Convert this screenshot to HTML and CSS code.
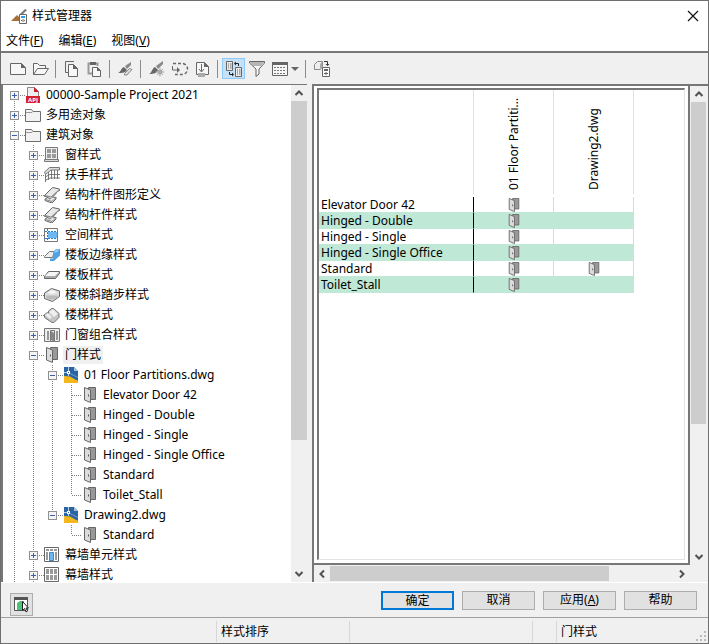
FILE: index.html
```
<!DOCTYPE html>
<html lang="zh-CN">
<head>
  <meta charset="UTF-8">
  <title>样式管理器</title>
  <link rel="stylesheet" href="styles.css">
</head>
<body>
  <!-- shared icons -->
  <svg class="defs" width="0" height="0">
    <symbol id="door" viewBox="0 0 16 16">
      <path d="M6.500.5h7v12h-7z" fill="#999" stroke="#666"/>
      <path d="M2.500.5L8.500 3v12.500l-6-2.500z" fill="#dcdcdc" stroke="#666"/>
      <path d="M6 7.500h1v2H6z" fill="#555"/>
    </symbol>
    <symbol id="folder" viewBox="0 0 16 16">
      <path d="M.5 2.500h6l1.500 2h7.500v10H.5z" fill="#f2f2f2" stroke="#6e6e6e"/>
      <path d="M1 5.500h6l1-1" fill="none" stroke="#999"/>
    </symbol>
    <symbol id="dwg" viewBox="0 0 16 16">
      <path d="M1 0h10l4 4v10L1 9z" fill="#2b64a2"/>
      <path d="M11 0l4 4h-4z" fill="#a9c0d8"/>
      <path d="M1 9l6 .5 8 4.500v2H1z" fill="#f4b71e"/>
      <path d="M5.500 0v4M5.500 7v2M1 5.500h3" stroke="#b9cde2" fill="none"/>
      <path d="M7 6.500l8 4" stroke="#8fb0d2" stroke-width=".7" fill="none"/>
      <path d="M4 4h3v3H4z" fill="#fff"/>
      <path d="M5 5h1v1H5z" fill="#2b64a2"/>
    </symbol>
    <symbol id="beam" viewBox="0 0 16 16">
      <path d="M.5 8.500l8-8 7 1.500v1.500l-2 1-5 5.500 3.500.5v1.500l-4 4-7-2.500v-1.500l3.500-2-4-.5z" fill="#e9e9e9" stroke="#666"/>
      <path d="M1 8.500l6 1.500 8.500-7.500M1.500 12.500l6.500 2 4-4" fill="none" stroke="#888"/>
      <path d="M5 10.500l2 .5 6-6v1l-5 5-2 1.500-2-.5z" fill="#8a8a8a"/>
    </symbol>
    <symbol id="up" viewBox="0 0 16 16"><path d="M4.500 10L8 6.500l3.500 3.500" fill="none" stroke="#505050" stroke-width="2"/></symbol>
    <symbol id="down" viewBox="0 0 16 16"><path d="M4.500 6L8 9.500 11.500 6" fill="none" stroke="#505050" stroke-width="2"/></symbol>
    <symbol id="left" viewBox="0 0 16 16"><path d="M10 4.500L6.500 8l3.500 3.500" fill="none" stroke="#505050" stroke-width="2"/></symbol>
    <symbol id="right" viewBox="0 0 16 16"><path d="M6 4.500L9.500 8 6 11.500" fill="none" stroke="#505050" stroke-width="2"/></symbol>
  </svg>

  <div class="window">
    <header class="titlebar">
      <svg width="17" height="17" viewBox="0 0 17 17">
        <path d="M0 13l6-6 2 2v4z" fill="#a9713a"/>
        <path d="M8 7l6-6 2 1-4 4z" fill="#777"/>
        <path d="M8.500 6.500h7v9h-7z" fill="#fff" stroke="#666"/>
        <path d="M10 8h4v2h-4z" fill="#2d9ae8"/>
        <path d="M10 12h4v1h-4zM11.500 11v3h1v-3z" fill="#666"/>
      </svg>
      <h1>样式管理器</h1>
      <button class="close" aria-label="关闭">
        <svg width="12" height="12" viewBox="0 0 12 12"><path d="M1 1l10 10M11 1L1 11" stroke="#111" stroke-width="1.200"/></svg>
      </button>
    </header>

    <nav class="menubar">
      <button>文件(<u>F</u>)</button>
      <button>编辑(<u>E</u>)</button>
      <button>视图(<u>V</u>)</button>
    </nav>

    <div class="toolbar">
      <button aria-label="新建图形">
        <svg width="18" height="16" viewBox="0 0 18 16"><path d="M1.500 2.500h11l4 4v7h-15z" fill="#f7f7f7" stroke="#666"/><path d="M12 2v5h5z" fill="#666"/></svg>
      </button>
      <button aria-label="打开图形">
        <svg width="18" height="16" viewBox="0 0 18 16"><path d="M1.500 13.500v-11h4l2 2h6v3M1.500 13.500l4-6h11l-4 6z" fill="#f7f7f7" stroke="#666"/></svg>
      </button>
      <span class="sep"></span>
      <button aria-label="复制">
        <svg width="16" height="16" viewBox="0 0 16 16"><path d="M10 .5H1.500v11H4" fill="none" stroke="#666"/><path d="M4.500 3.500h5l4 4v8h-9z" fill="#f7f7f7" stroke="#666"/><path d="M9 3v5h5z" fill="#666"/></svg>
      </button>
      <button aria-label="粘贴">
        <svg width="16" height="16" viewBox="0 0 16 16"><path d="M5 12.500H1.500v-10h9V5" fill="none" stroke="#999" stroke-width="2"/><path d="M3 1h6v3H3z" fill="#666"/><path d="M5.500 6.500h5l3 3v6h-8z" fill="#f7f7f7" stroke="#666"/><path d="M10 6v4h4z" fill="#666"/></svg>
      </button>
      <span class="sep"></span>
      <button aria-label="编辑样式">
        <svg width="18" height="16" viewBox="0 0 18 16"><path d="M1 12c3-1 3-5 6-6l3 3c-2 3-5 3-9 3z" fill="#666"/><path d="M8 5l6-4v3l-4 4z" fill="#888"/><path d="M7.500 12.500l5-5 2.500 1-5 5.500H7.500z" fill="#ddd" stroke="#888"/></svg>
      </button>
      <span class="sep"></span>
      <button aria-label="新建样式">
        <svg width="18" height="16" viewBox="0 0 18 16"><path d="M1 13c3-1 3-6 6-7l3 3c-1 3-4 4-9 4z" fill="#666"/><path d="M8 5l7-5v3l-5 5z" fill="#888"/><path d="M12 6.500v9M7.500 11h9M9 8l6 6M15 8l-6 6" stroke="#aaa"/><circle cx="12" cy="11" r="2.500" fill="#aaa"/></svg>
      </button>
      <button aria-label="清理">
        <svg width="18" height="16" viewBox="0 0 18 16"><path d="M2 2.500h9a5.500 5.500 0 0 1 0 11H4" fill="none" stroke="#666" stroke-width="1.500" stroke-dasharray="3 2"/><path d="M1.500 5v4H6" fill="none" stroke="#666"/><path d="M6 6v6l3-3z" fill="#666"/></svg>
      </button>
      <button aria-label="导入">
        <svg width="16" height="16" viewBox="0 0 16 16"><path d="M3 13.500H1.500v-12h8l4 4v8H10" fill="#f7f7f7" stroke="#666"/><path d="M9 1v5h5z" fill="#666"/><path d="M6.500 3v7M4 8l2.500 3L9 8" fill="none" stroke="#666"/><path d="M3 12h7v4H3z" fill="#aaa"/></svg>
      </button>
      <span class="sep"></span>
      <button class="on" aria-label="切换视图">
        <svg width="18" height="18" viewBox="0 0 18 18"><path d="M1.500 1.500h6v9h-6zM10.500 7.500h6v9h-6z" fill="#eee" stroke="#666"/><path d="M3 4h1M5 4h1.500M3 6h1M5 6h1.500M3 8h1M5 8h1.500M12 10h1M14 10h1.500M12 12h1M14 12h1.500M12 14h1M14 14h1.500" stroke="#666"/><path d="M10 3.500h3.500V6M8 14.500H4.500V12" fill="none" stroke="#222"/><path d="M11 1.500v4L9 3.500zM7 12.500v4l2-2z" fill="#222"/></svg>
      </button>
      <button aria-label="过滤">
        <svg width="18" height="18" viewBox="0 0 18 18"><path d="M1.500 1.500h15v1.500L11 9v5l-3 2.500V9L1.500 3z" fill="#f7f7f7" stroke="#666"/><path d="M2 2h14l-3 4H5z" fill="#b5b5b5"/></svg>
      </button>
      <button class="wide" aria-label="视图">
        <svg width="28" height="16" viewBox="0 0 28 16"><path d="M1.500 1.500h15v13h-15z" fill="#f7f7f7" stroke="#666"/><path d="M1 1h16v3H1z" fill="#666"/><path d="M3 6.500h12M3 9.500h12M3 12.500h12" stroke="#777" stroke-dasharray="2 1"/><path d="M20 6h8l-4 4z" fill="#666"/></svg>
      </button>
      <span class="sep"></span>
      <button aria-label="指定样式">
        <svg width="18" height="18" viewBox="0 0 18 18"><path d="M1.500 4.500l3-3h5v5l-2 3h-6z" fill="#eee" stroke="#888"/><path d="M7 4l2-2v5L7 9z" fill="#aaa"/><path d="M9.500 7.500h7v9h-7z" fill="#fff" stroke="#666"/><path d="M11 9h4v2h-4zM11 13h4v1h-4zM12.500 12h1v3h-1z" fill="#666"/><path d="M11 1.500h3.500V5" stroke="#333" fill="none"/><path d="M12.500 4h4l-2 2z" fill="#333"/></svg>
      </button>
    </div>

    <main class="panes">
      <section class="tree-pane">
        <ul class="tree root">
          <li><div class="row"><button class="toggle" aria-label="展开"></button><i></i>
            <svg width="16" height="16" viewBox="0 0 16 16"><path d="M2.500.5h7l4 4v10h-11z" fill="#eee" stroke="#888"/><path d="M9 0l5 5H9z" fill="#c9202c"/><path d="M1 9h14v7H1z" fill="#d7202c"/><text x="8" y="14.500" class="badge">APJ</text></svg>
            <span>00000-Sample Project 2021</span></div></li>
          <li><div class="row"><button class="toggle" aria-label="展开"></button><i></i><svg width="16" height="16"><use href="#folder"/></svg><span>多用途对象</span></div></li>
          <li class="more"><div class="row"><button class="toggle open" aria-label="折叠"></button><i></i><svg width="16" height="16"><use href="#folder"/></svg><span>建筑对象</span></div>
            <ul class="tree">
              <li><div class="row"><button class="toggle" aria-label="展开"></button><i></i>
                <svg width="16" height="16" viewBox="0 0 16 16"><path d="M1.500.5h12v12h-12z" fill="#eee" stroke="#777"/><path d="M3 2h4v4H3zM8 2h4v4H8zM3 7h4v4H3zM8 7h4v4H8z" fill="#999"/><path d="M.5 12.500h14v2H.5z" fill="#ddd" stroke="#777"/></svg>
                <span>窗样式</span></div></li>
              <li><div class="row"><button class="toggle" aria-label="展开"></button><i></i>
                <svg width="16" height="16" viewBox="0 0 16 16"><path d="M1.500 15V7M4.500 13V5M7.500 12V3M10.500 12V3M13.500 12V3M1 13.500l5-2.500h10M1 10l5-2.500h10" fill="none" stroke="#777"/><path d="M.5 5l5-4.500h10v2.500H7L1.500 7.500z" fill="#ddd" stroke="#777"/></svg>
                <span>扶手样式</span></div></li>
              <li><div class="row"><button class="toggle" aria-label="展开"></button><i></i><svg width="16" height="16"><use href="#beam"/></svg><span>结构杆件图形定义</span></div></li>
              <li><div class="row"><button class="toggle" aria-label="展开"></button><i></i><svg width="16" height="16"><use href="#beam"/></svg><span>结构杆件样式</span></div></li>
              <li><div class="row"><button class="toggle" aria-label="展开"></button><i></i>
                <svg width="16" height="16" viewBox="0 0 16 16"><path d="M.5 1.500h13v13H.5z" fill="#fff" stroke="#777"/><path d="M4 5h9v6H4z" fill="#6db8f2"/><path d="M3.500 2v12M1 4.500h12M1 11.500h12" stroke="#1d83d4" stroke-dasharray="2 1"/></svg>
                <span>空间样式</span></div></li>
              <li><div class="row"><button class="toggle" aria-label="展开"></button><i></i>
                <svg width="16" height="16" viewBox="0 0 16 16"><path d="M.5 9.500l5-5h5l-2 6h-8z" fill="#eee" stroke="#777"/><path d="M9 8.500V5l3-3h4v6.500L10 14H6v-2.500h3z" fill="#4da3e6"/><path d="M9.500 5.500l3-3h3l-3 3z" fill="#9bcdf5"/></svg>
                <span>楼板边缘样式</span></div></li>
              <li><div class="row"><button class="toggle" aria-label="展开"></button><i></i>
                <svg width="16" height="16" viewBox="0 0 16 16"><path d="M.5 9.500l4-5h11v2l-4 5H.5z" fill="#aaa" stroke="#666"/><path d="M1 9l4-4h10l-4 4z" fill="#f5f5f5"/></svg>
                <span>楼板样式</span></div></li>
              <li><div class="row"><button class="toggle" aria-label="展开"></button><i></i>
                <svg width="16" height="16" viewBox="0 0 16 16"><path d="M.5 6l7-4.500 8 2.500v5.500l-7 5-8-3z" fill="#ddd" stroke="#666"/><path d="M2 8.500h12v2l-5 2H3z" fill="#bbb"/><path d="M3 6l5-3 5 2-4 2z" fill="#f4f4f4"/></svg>
                <span>楼梯斜踏步样式</span></div></li>
              <li><div class="row"><button class="toggle" aria-label="展开"></button><i></i>
                <svg width="16" height="16" viewBox="0 0 16 16"><path d="M.5 7.500l3-2 1 1V4l3-2.500h2l5.500 5v4l-5 5h-2l-7.500-5z" fill="#c4c4c4" stroke="#777"/><path d="M1 8l3-2 4 4-2 2zM5 5l4-3 5 5-4 3z" fill="#eee"/></svg>
                <span>楼梯样式</span></div></li>
              <li><div class="row"><button class="toggle" aria-label="展开"></button><i></i>
                <svg width="16" height="16" viewBox="0 0 16 16"><path d="M.5 1.500h15v13H.5z" fill="#eee" stroke="#777"/><path d="M3 4h2v9H3zM12 4h2v9h-2z" fill="#999"/><path d="M6.500 3.500h4v11h-4z" fill="#eee" stroke="#777"/><path d="M7 4l3 2v9l-3-2z" fill="#888"/></svg>
                <span>门窗组合样式</span></div></li>
              <li><div class="row"><button class="toggle open" aria-label="折叠"></button><i></i><svg width="16" height="16"><use href="#door"/></svg><span class="selected">门样式</span></div>
                <ul class="tree">
                  <li><div class="row"><button class="toggle open" aria-label="折叠"></button><i></i><svg width="16" height="16"><use href="#dwg"/></svg><span>01 Floor Partitions.dwg</span></div>
                    <ul class="tree">
                      <li><div class="row leaf"><i></i><svg width="16" height="16"><use href="#door"/></svg><span>Elevator Door 42</span></div></li>
                      <li><div class="row leaf"><i></i><svg width="16" height="16"><use href="#door"/></svg><span>Hinged - Double</span></div></li>
                      <li><div class="row leaf"><i></i><svg width="16" height="16"><use href="#door"/></svg><span>Hinged - Single</span></div></li>
                      <li><div class="row leaf"><i></i><svg width="16" height="16"><use href="#door"/></svg><span>Hinged - Single Office</span></div></li>
                      <li><div class="row leaf"><i></i><svg width="16" height="16"><use href="#door"/></svg><span>Standard</span></div></li>
                      <li><div class="row leaf"><i></i><svg width="16" height="16"><use href="#door"/></svg><span>Toilet_Stall</span></div></li>
                    </ul>
                  </li>
                  <li><div class="row"><button class="toggle open" aria-label="折叠"></button><i></i><svg width="16" height="16"><use href="#dwg"/></svg><span>Drawing2.dwg</span></div>
                    <ul class="tree">
                      <li><div class="row leaf"><i></i><svg width="16" height="16"><use href="#door"/></svg><span>Standard</span></div></li>
                    </ul>
                  </li>
                </ul>
              </li>
              <li><div class="row"><button class="toggle" aria-label="展开"></button><i></i>
                <svg width="16" height="16" viewBox="0 0 16 16"><path d="M.5.5h14v14H.5z" fill="#fff" stroke="#666"/><path d="M2 2h3v2H2zM6 2h3v2H6zM10 2h3v2h-3zM2 5h2v8H2zM11 5h2v8h-2z" fill="#999"/><path d="M5.500 5.500h4v8h-4z" fill="#6db8f2" stroke="#3a8ac8"/></svg>
                <span>幕墙单元样式</span></div></li>
              <li class="more"><div class="row"><button class="toggle" aria-label="展开"></button><i></i>
                <svg width="16" height="16" viewBox="0 0 16 16"><path d="M.5.5h14v14H.5z" fill="#fff" stroke="#666"/><path d="M2 2h3v5H2zM6 2h3v5H6zM10 2h3v5h-3zM2 8h3v5H2zM6 8h3v5H6zM10 8h3v5h-3z" fill="#999"/></svg>
                <span>幕墙样式</span></div></li>
            </ul>
          </li>
        </ul>
        <div class="vscroll">
          <svg width="16" height="16"><use href="#up"/></svg>
          <div class="track"><div class="thumb tree-thumb"></div></div>
          <svg width="16" height="16"><use href="#down"/></svg>
        </div>
      </section>

      <section class="grid-pane">
        <div class="view">
          <div class="sheet">
            <table>
              <colgroup><col class="names"><col class="file"><col class="file"></colgroup>
              <thead>
                <tr><th></th><th><span>01 Floor Partiti...</span></th><th><span>Drawing2.dwg</span></th></tr>
              </thead>
              <tbody>
                <tr><td>Elevator Door 42</td><td><svg width="16" height="16"><use href="#door"/></svg></td><td></td></tr>
                <tr><td>Hinged - Double</td><td><svg width="16" height="16"><use href="#door"/></svg></td><td></td></tr>
                <tr><td>Hinged - Single</td><td><svg width="16" height="16"><use href="#door"/></svg></td><td></td></tr>
                <tr><td>Hinged - Single Office</td><td><svg width="16" height="16"><use href="#door"/></svg></td><td></td></tr>
                <tr><td>Standard</td><td><svg width="16" height="16"><use href="#door"/></svg></td><td><svg width="16" height="16"><use href="#door"/></svg></td></tr>
                <tr><td>Toilet_Stall</td><td><svg width="16" height="16"><use href="#door"/></svg></td><td></td></tr>
              </tbody>
            </table>
          </div>
        </div>
        <div class="vscroll">
          <svg width="16" height="16"><use href="#up"/></svg>
          <div class="track"><div class="thumb grid-thumb"></div></div>
          <svg width="16" height="16"><use href="#down"/></svg>
        </div>
        <div class="hscroll">
          <svg width="16" height="16"><use href="#left"/></svg>
          <div class="track"><div class="thumb"></div></div>
          <svg width="16" height="16"><use href="#right"/></svg>
        </div>
      </section>
    </main>

    <div class="actions">
      <button class="preview" aria-label="浮动查看器">
        <svg width="17" height="17" viewBox="0 0 17 17"><path d="M1.500 1.500h13v13h-13z" fill="#fff" stroke="#555"/><path d="M1 1h14v3H1z" fill="#555"/><path d="M4 7l3-2h4v7l-2 2H4z" fill="#4fc177"/><path d="M9.500 5.500v9l2-2 1.500 3.500 1.500-1-1.500-3h2.500z" fill="#fff" stroke="#222"/></svg>
      </button>
      <button class="btn primary">确定</button>
      <button class="btn">取消</button>
      <button class="btn">应用(<u>A</u>)</button>
      <button class="btn">帮助</button>
    </div>

    <footer class="status">
      <span></span><span>样式排序</span><span></span><span></span><span>门样式</span>
      <svg width="12" height="12" viewBox="0 0 12 12"><path d="M8 0h2v2H8zM4 4h2v2H4zM8 4h2v2H8zM0 8h2v2H0zM4 8h2v2H4zM8 8h2v2H8z" fill="#bbb"/></svg>
    </footer>
  </div>
</body>
</html>
```
FILE: styles.css
```
* { box-sizing: border-box; }

body {
  margin: 0;
  background: #f0f0f0;
  color: #000;
  font: 12px/16px "Noto Sans", "Noto Sans CJK SC", sans-serif;
}

button {
  margin: 0;
  padding: 0;
  border: 0;
  background: none;
  font: inherit;
  color: inherit;
}

svg { display: block; flex: none; }
.defs { position: absolute; }

.window {
  display: flex;
  flex-direction: column;
  height: 100vh;
  border: 1px solid #6e6e6e;
}

/* title and menus */
.titlebar {
  display: flex;
  align-items: center;
  gap: 4px;
  height: 30px;
  padding: 0 9px 0 10px;
  background: #fff;
}

.titlebar h1 {
  flex: 1;
  margin: 0;
  font-size: 12px;
  font-weight: normal;
}

.menubar {
  display: flex;
  gap: 15px;
  height: 20px;
  padding: 0 5px;
  background: #fff;
}

/* toolbar */
.toolbar {
  display: flex;
  align-items: center;
  height: 33px;
  padding: 0 5px;
  border-top: 2px solid #777;
}

.toolbar button {
  display: flex;
  align-items: center;
  justify-content: center;
  width: 23px;
  height: 21px;
}

.toolbar button.on {
  background: #c5e1f7;
  border: 1px solid #90c8f6;
}

.toolbar button.wide { width: 34px; }

.sep {
  width: 1px;
  height: 18px;
  margin: 0 4px 0 3px;
  background: #8c8c8c;
}

/* panes */
.panes {
  display: flex;
  flex: 1;
  gap: 5px;
  min-height: 0;
  border-bottom: 1px solid #fff;
}

.tree-pane {
  display: flex;
  width: 306px;
  border: solid #777;
  border-width: 1px 0 0 2px;
  background: #fff;
}

.tree {
  margin: 0;
  padding: 0 0 0 19px;
  list-style: none;
}

.tree.root {
  flex: 1;
  padding: 0;
  overflow: hidden;
}

/* dotted connector down the left of each item */
.tree li {
  background: repeating-linear-gradient(#808080 0 1px, transparent 1px 2px) 11px 0 / 1px 100% no-repeat;
}

.tree li:last-child:not(.more) { background-size: 1px 10px; }
.tree.root > li:first-child { background-position: 11px 10px; }

.row {
  display: flex;
  align-items: center;
  height: 20px;
  padding-left: 7px;
}

.row.leaf { padding-left: 11px; }

.row i {
  width: 6px;
  height: 1px;
  background: repeating-linear-gradient(90deg, transparent 0 1px, #808080 1px 2px);
}

.row.leaf i { width: 11px; }

.row span {
  margin-left: 3px;
  padding: 0 2px;
  line-height: 18px;
  white-space: nowrap;
}

.row .selected { background: #f0f0f0; }

.badge {
  fill: #fff;
  font-size: 6px;
  font-weight: bold;
  text-anchor: middle;
}

.toggle {
  flex: none;
  width: 9px;
  height: 9px;
  border: 1px solid #919191;
  background:
    linear-gradient(#3a5fa8, #3a5fa8) center / 5px 1px no-repeat,
    linear-gradient(#3a5fa8, #3a5fa8) center / 1px 5px no-repeat,
    #f5f5f5;
}

.toggle.open {
  background: linear-gradient(#3a5fa8, #3a5fa8) center / 5px 1px no-repeat, #f5f5f5;
}

/* scrollbars */
.vscroll {
  display: flex;
  flex-direction: column;
  width: 16px;
  background: #f0f0f0;
}

.hscroll {
  display: flex;
  grid-column: 1;
  height: 17px;
  padding: 1px 0;
  background: #f0f0f0;
}

.track { flex: 1; }
.thumb { background: #cdcdcd; }
.tree-thumb { height: 73%; }
.grid-thumb { height: 72%; }
.hscroll .thumb { width: 81%; height: 100%; }

/* style matrix */
.grid-pane {
  display: grid;
  flex: 1;
  grid-template-columns: 1fr 18px;
  grid-template-rows: 1fr 17px;
  min-width: 0;
  border: solid #777;
  border-width: 2px 0 0 2px;
}

.view {
  padding: 2px 3px 3px;
  border: solid #777;
  border-width: 0 2px 2px 0;
  background: #fff;
}

.sheet {
  height: 100%;
  border: solid #777;
  border-width: 2px 1px 1px 2px;
  border-right-color: #e3e3e3;
  border-bottom-color: #e3e3e3;
}

.grid-pane .vscroll { padding-left: 1px; }

table {
  table-layout: fixed;
  width: 315px;
  border-spacing: 0;
}

.names { width: 155px; }
.file { width: 80px; }

th {
  height: 107px;
  padding: 0 0 3px;
  background: linear-gradient(#e0e0e0, #e0e0e0) right top / 1px 104px no-repeat;
  font-weight: normal;
  vertical-align: bottom;
}

th span {
  display: block;
  height: 100px;
  margin: 0 auto;
  padding-top: 4px;
  line-height: 18px;
  text-align: left;
  white-space: nowrap;
  writing-mode: vertical-rl;
  transform: rotate(180deg);
}

td {
  height: 16px;
  padding: 1px 0 0;
  border: solid #bfe8d6;
  border-width: 0 1px 1px 0;
  line-height: 14px;
}

td:first-child {
  padding-left: 2px;
  border-right-color: #000;
}

td svg { height: 14px; margin: 0 auto; overflow: visible; }
tbody tr:nth-child(even) { background: #bfe8d6; }

/* bottom buttons */
.actions {
  display: flex;
  align-items: center;
  gap: 8px;
  height: 34px;
  padding: 0 11px 0 9px;
}

.preview {
  display: flex;
  align-items: center;
  justify-content: center;
  width: 23px;
  height: 23px;
  margin: 8px auto 0 0;
  border: 1px solid #adadad;
  background: #e1e1e1;
}

.btn {
  width: 73px;
  height: 19px;
  border: 1px solid #adadad;
  background: #e1e1e1;
  line-height: 16px;
}

.btn.primary { border: 2px solid #0078d7; }

/* status bar */
.status {
  display: grid;
  grid-template-columns: 215px 133px 183px 24px 1fr 12px;
  height: 26px;
  padding-top: 3px;
  border-top: 1px solid #a0a0a0;
}

.status span {
  height: 21px;
  padding-left: 4px;
  border-left: 1px solid #d7d7d7;
  line-height: 22px;
}

.status span:first-child { border: 0; }
.status svg { align-self: end; }
```
